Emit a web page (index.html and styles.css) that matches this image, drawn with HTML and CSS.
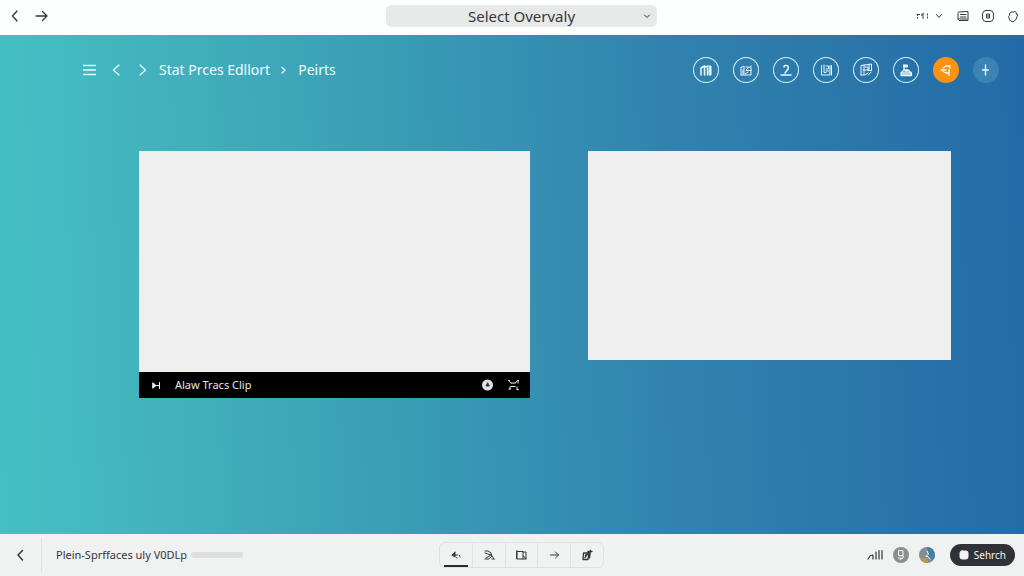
FILE: index.html
```html
<!DOCTYPE html>
<html lang="en">
<head>
<meta charset="utf-8">
<meta name="viewport" content="width=device-width, initial-scale=1">
<title>Select Overvaly</title>
<link rel="stylesheet" href="styles.css">
</head>
<body>
<header class="topbar">
  <nav class="topbar-nav" aria-label="History">
    <button class="icon-btn" aria-label="Back"><svg width="16" height="16" viewBox="0 0 16 16"><path d="M10 3L5.500 8l4.500 5" stroke-width="1.300"/></svg></button>
    <button class="icon-btn" aria-label="Forward"><svg width="16" height="16" viewBox="0 0 16 16"><path d="M3 8h11M9.500 3.500L14 8l-4.500 4.500" stroke-width="1.300"/></svg></button>
  </nav>
  <div class="picker">
    <select class="picker-select" aria-label="View"><option>Select Overvaly</option></select>
    <svg class="picker-arrow" width="8" height="8" viewBox="0 0 8 8"><path d="M1.500 3L4 5.500 6.500 3"/></svg>
  </div>
  <div class="topbar-tools">
    <button class="icon-btn menu-btn" aria-label="More options">
      <svg width="13" height="8" viewBox="0 0 13 8"><path d="M1 2.500h2.500M1.500 2.500v1M1.500 5.500v.5M6 2h2M6 2v2h1.500M6.500 6h1M11.500 2v1M11.500 5v1"/></svg>
      <svg width="8" height="8" viewBox="0 0 8 8"><path d="M1.500 2.500L4 5.500l2.500-3"/></svg>
    </button>
    <button class="icon-btn" aria-label="Notes"><svg width="14" height="14" viewBox="0 0 14 14"><path d="M3 3l9-.5v9H3L2 10V4zM4.500 5.500H10M4.500 8H10M3 10h8"/></svg></button>
    <button class="icon-btn" aria-label="Panel"><svg width="14" height="14" viewBox="0 0 14 14"><rect x="1.500" y="1.500" width="11" height="11" rx="3.500"/><path d="M6 5h2.500v4H6zM6 7h2.500"/></svg></button>
    <button class="icon-btn" aria-label="Extensions"><svg width="14" height="14" viewBox="0 0 14 14"><path d="M3.500 4.500L6 2.500l1.500 1 1-1.500 2 2-.5 1 2 1-1 1.500-1 3-3 2.500-3-1.500-1.500-4 1-1z"/></svg></button>
  </div>
</header>

<main class="stage">
  <div class="toolbar">
    <nav class="crumbs" aria-label="Breadcrumb">
      <button class="icon-btn light" aria-label="Menu"><svg width="16" height="16" viewBox="0 0 16 16"><path d="M2.500 3.500h12M2.500 8h12M2.500 12.500h12" stroke-width="1.300"/></svg></button>
      <button class="icon-btn light" aria-label="Previous"><svg width="16" height="16" viewBox="0 0 16 16"><path d="M12 3L6.500 8l5.500 5" stroke-width="1.300"/></svg></button>
      <button class="icon-btn light" aria-label="Next"><svg width="16" height="16" viewBox="0 0 16 16"><path d="M7 3l5.500 5L7 13" stroke-width="1.300"/></svg></button>
      <a class="crumb" href="#">Stat Prces Edllort</a>
      <svg class="light" width="8" height="8" viewBox="0 0 8 8"><path d="M2 1.500l3 2.500-3 3" stroke-width="1.300"/></svg>
      <a class="crumb" href="#">Peirts</a>
    </nav>
    <div class="rounds">
      <button class="round" aria-label="Charts"><svg width="26" height="26" viewBox="0 0 26 26"><path d="M8 18v-7M11.500 18V9M14.500 18v-7M8 11l3.500-2M12 10l3-1" stroke-width="1.500"/><path class="fill" d="M16.500 9H18v9h-1.500z"/></svg></button>
      <button class="round" aria-label="Gallery"><svg width="26" height="26" viewBox="0 0 26 26"><path d="M8 10.500V18M8 10.500l3-1.500v8M8 18h10v-8M13 10h2.500L13 13.500h2.500M12 17l3-2M16 10.500L18 9M16 13.500h2M10 13v4"/></svg></button>
      <button class="round" aria-label="Stamp"><svg width="26" height="26" viewBox="0 0 26 26"><path d="M11 10q0-2 2.500-1.500T15 12l-3 4M8 18h10" stroke-width="1.500"/></svg></button>
      <button class="round" aria-label="Document"><svg width="26" height="26" viewBox="0 0 26 26"><path d="M8.500 8.500V18H17V8.500M11 8v7.500h2M13 9h2.500v3H13M13 14h2.500M18.500 8.500V18"/></svg></button>
      <button class="round" aria-label="Frames"><svg width="26" height="26" viewBox="0 0 26 26"><path d="M8 18V8.500L18.500 7v6.500H15M11 8v9M10 13h5v-3h-3M16 8v5M8 18h4l3-2M18 15l-2.500 3"/></svg></button>
      <button class="round" aria-label="Upload"><svg width="26" height="26" viewBox="0 0 26 26"><path class="fill" d="M11 8h3.500v2H11z"/><path d="M11 8v5l-3 3v2.500h10.500V16L15 13h-4M8 16h10M12 13v1h3M9 18h9" stroke-width="1.300"/></svg></button>
      <button class="round accent" aria-label="Share"><svg width="26" height="26" viewBox="0 0 26 26"><path d="M8 13h5M10 11l3-2h4v2M10 14.500l3 1.500h3v2.500M16 13v3" stroke-width="1.300"/></svg></button>
      <button class="round soft" aria-label="Add"><svg width="26" height="26" viewBox="0 0 26 26"><path d="M12.500 8v10M9.500 13h6" stroke-width="1.300"/></svg></button>
    </div>
  </div>

  <div class="clips">
    <section class="clip">
      <div class="screen main-screen"></div>
      <div class="clip-bar">
        <button class="icon-btn light" aria-label="Play next"><svg width="10" height="10" viewBox="0 0 10 10"><path class="fill" d="M2 3l3 2.500L2 8z"/><path d="M8.500 2.500v6M5.500 5.500h2"/></svg></button>
        <span class="clip-title">Alaw Tracs Clip</span>
        <button class="icon-btn light" aria-label="Record"><svg width="12" height="12" viewBox="0 0 12 12"><circle class="disc" cx="6.500" cy="6" r="5.500"/><path class="hole" d="M6.500 4L5 7h3z"/></svg></button>
        <button class="icon-btn light" aria-label="Full screen"><svg width="12" height="12" viewBox="0 0 12 12"><path d="M1.500 1.500h1M2.500 2.500L4 4M10.500 1.500h1M9.500 2.500L8.500 4M4 4h4M4 7.500h4M2 10h1.500M3 8v2M10 8v2M10 10.500h1.500M11 2v2"/></svg></button>
      </div>
    </section>
    <section class="clip">
      <div class="screen side-screen"></div>
    </section>
  </div>
</main>

<footer class="bottombar">
  <div class="project">
    <button class="icon-btn back" aria-label="Back"><svg width="16" height="16" viewBox="0 0 16 16"><path d="M10.500 3.500L6 8l4.500 5" stroke-width="1.500"/></svg></button>
    <label class="project-name" for="progress">Plein-Sprffaces uly V0DLp</label>
    <progress class="progress" id="progress" value="0" max="100"></progress>
  </div>
  <div class="modes">
    <button class="mode active" aria-label="Undo"><svg width="14" height="14" viewBox="0 0 14 14"><path class="fill" d="M3 7l3-2.500v4z"/><path d="M6 7h2.500M6 4.500V4M7 9.500l1 .5M10.500 7.500l.5 1.500"/></svg></button>
    <button class="mode" aria-label="Effects"><svg width="14" height="14" viewBox="0 0 14 14"><path d="M3 3h3q4 1 4 5M3 5l6 2-5 3M3 11h4l3-3 2 3M10 11h2"/></svg></button>
    <button class="mode" aria-label="Layout"><svg width="14" height="14" viewBox="0 0 14 14"><path d="M3 3.500h6v7.500H3zM3 2.500v8M9 4h3v7H9M9.500 8l2.500 3"/></svg></button>
    <button class="mode" aria-label="Next"><svg width="14" height="14" viewBox="0 0 14 14"><path d="M3.500 7h8M8.500 4l3 3-3 3"/></svg></button>
    <button class="mode" aria-label="Edit"><svg width="14" height="14" viewBox="0 0 14 14"><path d="M3.500 5H9l-1 6.500H3zM5 9.500L7.500 6M9.500 10l1-7.500M8 3.500h4M5.500 7v2" stroke-width="1.300"/></svg></button>
  </div>
  <div class="status">
    <svg width="18" height="14" viewBox="0 0 18 14"><path d="M2 11l2.500-3.500L7 7v4M10 4v7M13 2.500V11M16 2.500V11" stroke-width="1.200"/></svg>
    <button class="icon-btn" aria-label="Profile"><svg width="18" height="18" viewBox="0 0 18 18"><circle class="profile" cx="9" cy="9" r="8"/><path class="mark" d="M6.500 5v4.500H11V5zM11 9.500V12l-3 1.500M6.500 12H9"/></svg></button>
    <button class="icon-btn" aria-label="Palette"><svg width="18" height="18" viewBox="0 0 18 18"><circle class="ring" cx="9" cy="9" r="8"/><path class="gold" d="M2 12a8 8 0 0 0 8 5l-1-5z"/><path class="blue" d="M9 1a8 8 0 0 1 6 13l-5-3z"/><path class="mark" d="M9 5l1.500 3L8 10.500h2L12 13"/></svg></button>
    <button class="search"><svg width="10" height="10" viewBox="0 0 10 10"><rect class="fill" x="1" y="1" width="8" height="8" rx="2"/></svg>Sehrch</button>
  </div>
</footer>
</body>
</html>
```

FILE: styles.css
```css
* {
  box-sizing: border-box;
}

body {
  margin: 0;
  min-height: 100vh;
  display: flex;
  flex-direction: column;
  font-family: "Noto Sans", sans-serif;
  color: #34363b;
}

button {
  font: inherit;
  color: inherit;
  border: 0;
  padding: 0;
  background: none;
  cursor: pointer;
}

svg {
  display: block;
  flex: none;
  fill: none;
  stroke: currentColor;
  stroke-linecap: round;
  stroke-linejoin: round;
}

.fill {
  fill: currentColor;
}

.icon-btn {
  display: flex;
  align-items: center;
  flex: none;
}

.light {
  color: #e8fbff;
}

.topbar {
  display: grid;
  grid-template-columns: 386fr 271fr 367fr;
  align-items: center;
  padding: 5px 0 8px;
  background: #fdfefe;
}

.topbar-nav {
  display: flex;
  gap: 10px;
  padding-left: 7px;
}

.picker {
  position: relative;
}

.picker-select {
  display: block;
  width: 100%;
  height: 22px;
  border: 0;
  border-radius: 6px;
  padding: 0;
  appearance: none;
  background: #e7e8e8;
  color: #36373c;
  font: 15px/22px "Noto Sans", sans-serif;
  text-align: center;
  text-align-last: center;
}

.picker-arrow {
  position: absolute;
  right: 6px;
  top: 7px;
  pointer-events: none;
}

.topbar-tools {
  display: flex;
  align-items: center;
  justify-content: flex-end;
  gap: 11px;
  padding-right: 4px;
}

.menu-btn {
  gap: 6px;
  margin-right: 2px;
}

.stage {
  flex: 1;
  padding: 22px 25px 40px 81px;
  background: linear-gradient(88deg, #46c0c4 0%, #40adbb 22%, #389ab5 42%, #3182ae 66%, #2a76aa 84%, #226ba8 100%);
}

.toolbar {
  display: flex;
  align-items: center;
  justify-content: space-between;
}

.crumbs {
  display: flex;
  align-items: center;
  gap: 10px;
}

.crumb {
  color: #f0fdff;
  font-size: 14px;
  line-height: 20px;
  text-decoration: none;
}

.rounds {
  display: flex;
  gap: 14px;
}

.round {
  width: 26px;
  height: 26px;
  border-radius: 50%;
  color: #eafaff;
  box-shadow: inset 0 0 0 1px #d3f1fa;
}

.accent {
  background: #fa930d;
  box-shadow: none;
}

.soft {
  background: #3b83b4;
  box-shadow: none;
}

.clips {
  display: grid;
  grid-template-columns: 391fr 363fr;
  gap: 58px;
  align-items: start;
  padding: 68px 48px 0 58px;
}

.screen {
  background: #efefef;
}

.main-screen {
  aspect-ratio: 391 / 221;
}

.side-screen {
  aspect-ratio: 363 / 209;
}

.clip-bar {
  display: flex;
  align-items: center;
  gap: 14px;
  height: 26px;
  padding: 0 11px 0 12px;
  background: #000;
}

.clip-title {
  flex: 1;
  color: #e6e6e6;
  font-size: 11px;
  line-height: 16px;
}

.disc {
  fill: #e2e2e6;
  stroke: none;
}

.hole {
  fill: #33343a;
  stroke: #33343a;
}

.bottombar {
  display: grid;
  grid-template-columns: 439fr 165fr 420fr;
  align-items: center;
  height: 42px;
  background: #f0f1f1;
}

.project {
  display: flex;
  align-items: center;
  height: 100%;
}

.back {
  align-self: stretch;
  width: 42px;
  margin: 4px 14px 4px 0;
  padding-left: 12px;
  border-right: 1px solid #e1e3e3;
}

.project-name {
  font-size: 11px;
  line-height: 16px;
  white-space: nowrap;
}

.progress {
  width: 52px;
  height: 6px;
  margin-left: 4px;
  border: 0;
  border-radius: 3px;
  overflow: hidden;
  appearance: none;
  background: #dddede;
}

.progress::-webkit-progress-bar {
  background: #dddede;
}

.modes {
  display: flex;
  border: 1px solid #dfe0e0;
  border-radius: 6px;
}

.mode {
  display: flex;
  flex: 1;
  align-items: center;
  justify-content: center;
  height: 24px;
  border-left: 1px solid #e1e2e2;
}

.mode:first-child {
  border-left: 0;
}

.active {
  background: linear-gradient(#292b37, #292b37) center bottom / 24px 2px no-repeat;
}

.status {
  display: flex;
  align-items: center;
  justify-content: flex-end;
  gap: 8px;
  padding-right: 9px;
}

.profile {
  fill: #8c8d8e;
  stroke: none;
}

.ring {
  fill: #7f8c99;
  stroke: none;
}

.gold {
  fill: #b39a45;
  stroke: none;
}

.blue {
  fill: #3d83a4;
  stroke: none;
}

.mark {
  stroke: #fff;
}

.search {
  display: flex;
  align-items: center;
  gap: 5px;
  height: 22px;
  margin-left: 6px;
  padding: 0 9px;
  border-radius: 11px;
  background: #303238;
  color: #f2f2f2;
  font-size: 10px;
  line-height: 16px;
}
```
